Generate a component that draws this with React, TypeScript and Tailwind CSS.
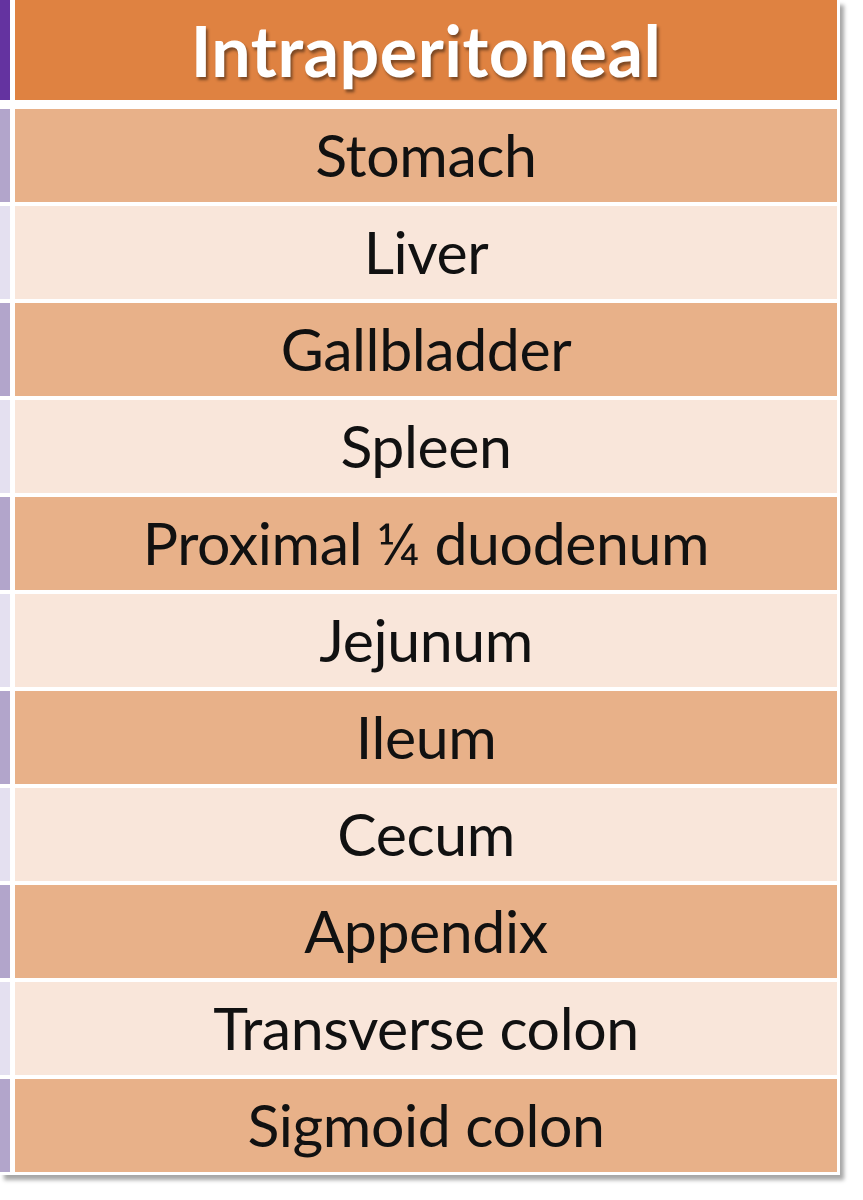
const organs = [
  'Stomach',
  'Liver',
  'Gallbladder',
  'Spleen',
  'Proximal ¼ duodenum',
  'Jejunum',
  'Ileum',
  'Cecum',
  'Appendix',
  'Transverse colon',
  'Sigmoid colon',
];

export default function App() {
  return (
    <div className="min-h-[1200px] w-[863px] bg-white font-['Lato','Liberation_Sans',sans-serif]">
      <div className="flex w-[840px] gap-[5px] bg-white pr-[3px] pb-[3px] shadow-[4px_5px_4px_rgba(0,0,0,0.35)]">
        {/* cut-off neighbouring column */}
        <div className="flex w-[10px] flex-col">
          <div className="h-[100px] bg-[#6433a0]" />
          <div className="mt-[9px] flex flex-col gap-[4px]">
            {organs.map((o, i) => (
              <div
                key={o}
                className={`h-[93px] ${i % 2 === 0 ? 'bg-[#b2a5cb]' : 'bg-[#e4e0f0]'}`}
              />
            ))}
          </div>
        </div>

        {/* Intraperitoneal column */}
        <div className="flex flex-1 flex-col">
          <div className="flex h-[100px] items-center justify-center bg-[#df8241] text-[70px] font-bold tracking-[0.5px] text-white [text-shadow:2px_3px_3px_rgba(0,0,0,0.45)]">
            Intraperitoneal
          </div>
          <div className="mt-[9px] flex flex-col gap-[4px]">
            {organs.map((o, i) => (
              <div
                key={o}
                className={`flex h-[93px] items-center justify-center text-[59px] tracking-[-0.4px] text-[#111] ${
                  i % 2 === 0 ? 'bg-[#e8b189]' : 'bg-[#f9e6da]'
                }`}
              >
                {o}
              </div>
            ))}
          </div>
        </div>
      </div>
    </div>
  );
}
